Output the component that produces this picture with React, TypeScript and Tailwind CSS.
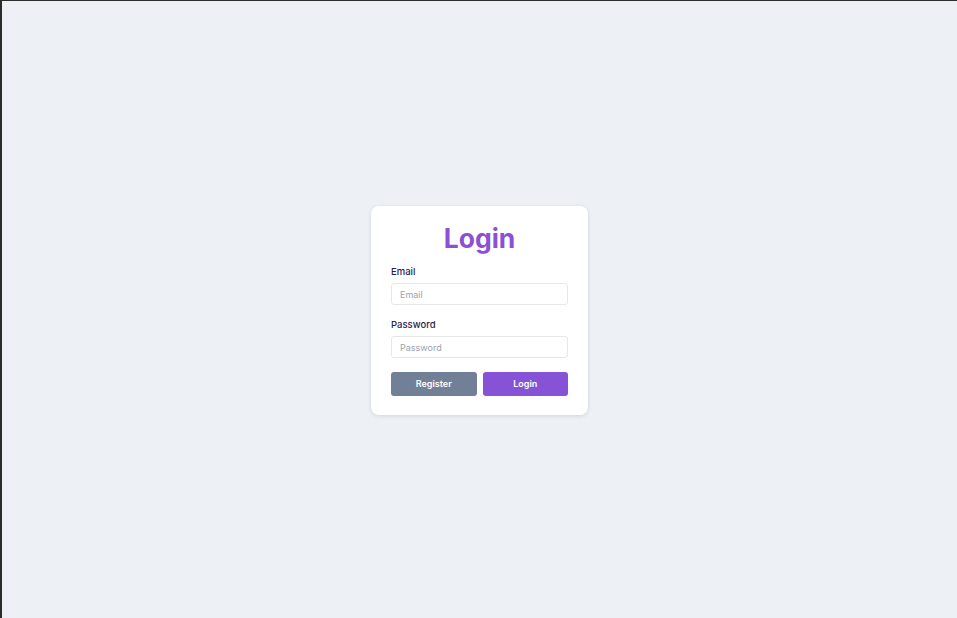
export default function App() {
  return (
    <div
      className="flex h-[618px] w-full items-center justify-center border-l-2 border-t border-[#2b2b2b] bg-[#edf1f6] pt-[2px]"
      style={{ fontFamily: "Inter, 'Noto Sans', sans-serif" }}
    >
      <div className="w-[217px] rounded-[8px] bg-white px-[20px] pt-[14px] pb-[19px] shadow-[0_1px_4px_rgba(0,0,0,0.12)]">
        <h1 className="text-center text-[26.5px] font-bold leading-[36px] text-[#8b50d6]">Login</h1>

        <label className="mt-[10px] block text-[9.5px] font-medium leading-[12px] text-[#2d1b50]">Email</label>
        <input
          className="mt-[5px] block h-[22px] w-full rounded-[3px] border border-[#e5e7eb] px-[8px] text-[9px] outline-none placeholder:text-[#9ca3af]"
          placeholder="Email"
        />

        <label className="mt-[14px] block text-[9.5px] font-medium leading-[12px] text-[#2d1b50]">Password</label>
        <input
          type="password"
          className="mt-[5px] block h-[22px] w-full rounded-[3px] border border-[#e5e7eb] px-[8px] text-[9px] outline-none placeholder:text-[#9ca3af]"
          placeholder="Password"
        />

        <div className="mt-[14px] flex gap-[6px]">
          <button className="h-[24px] flex-1 rounded-[3px] bg-[#718096] text-[9px] font-semibold text-white">
            Register
          </button>
          <button className="h-[24px] flex-1 rounded-[3px] bg-[#8753d6] text-[9px] font-semibold text-white">
            Login
          </button>
        </div>
      </div>
    </div>
  );
}
